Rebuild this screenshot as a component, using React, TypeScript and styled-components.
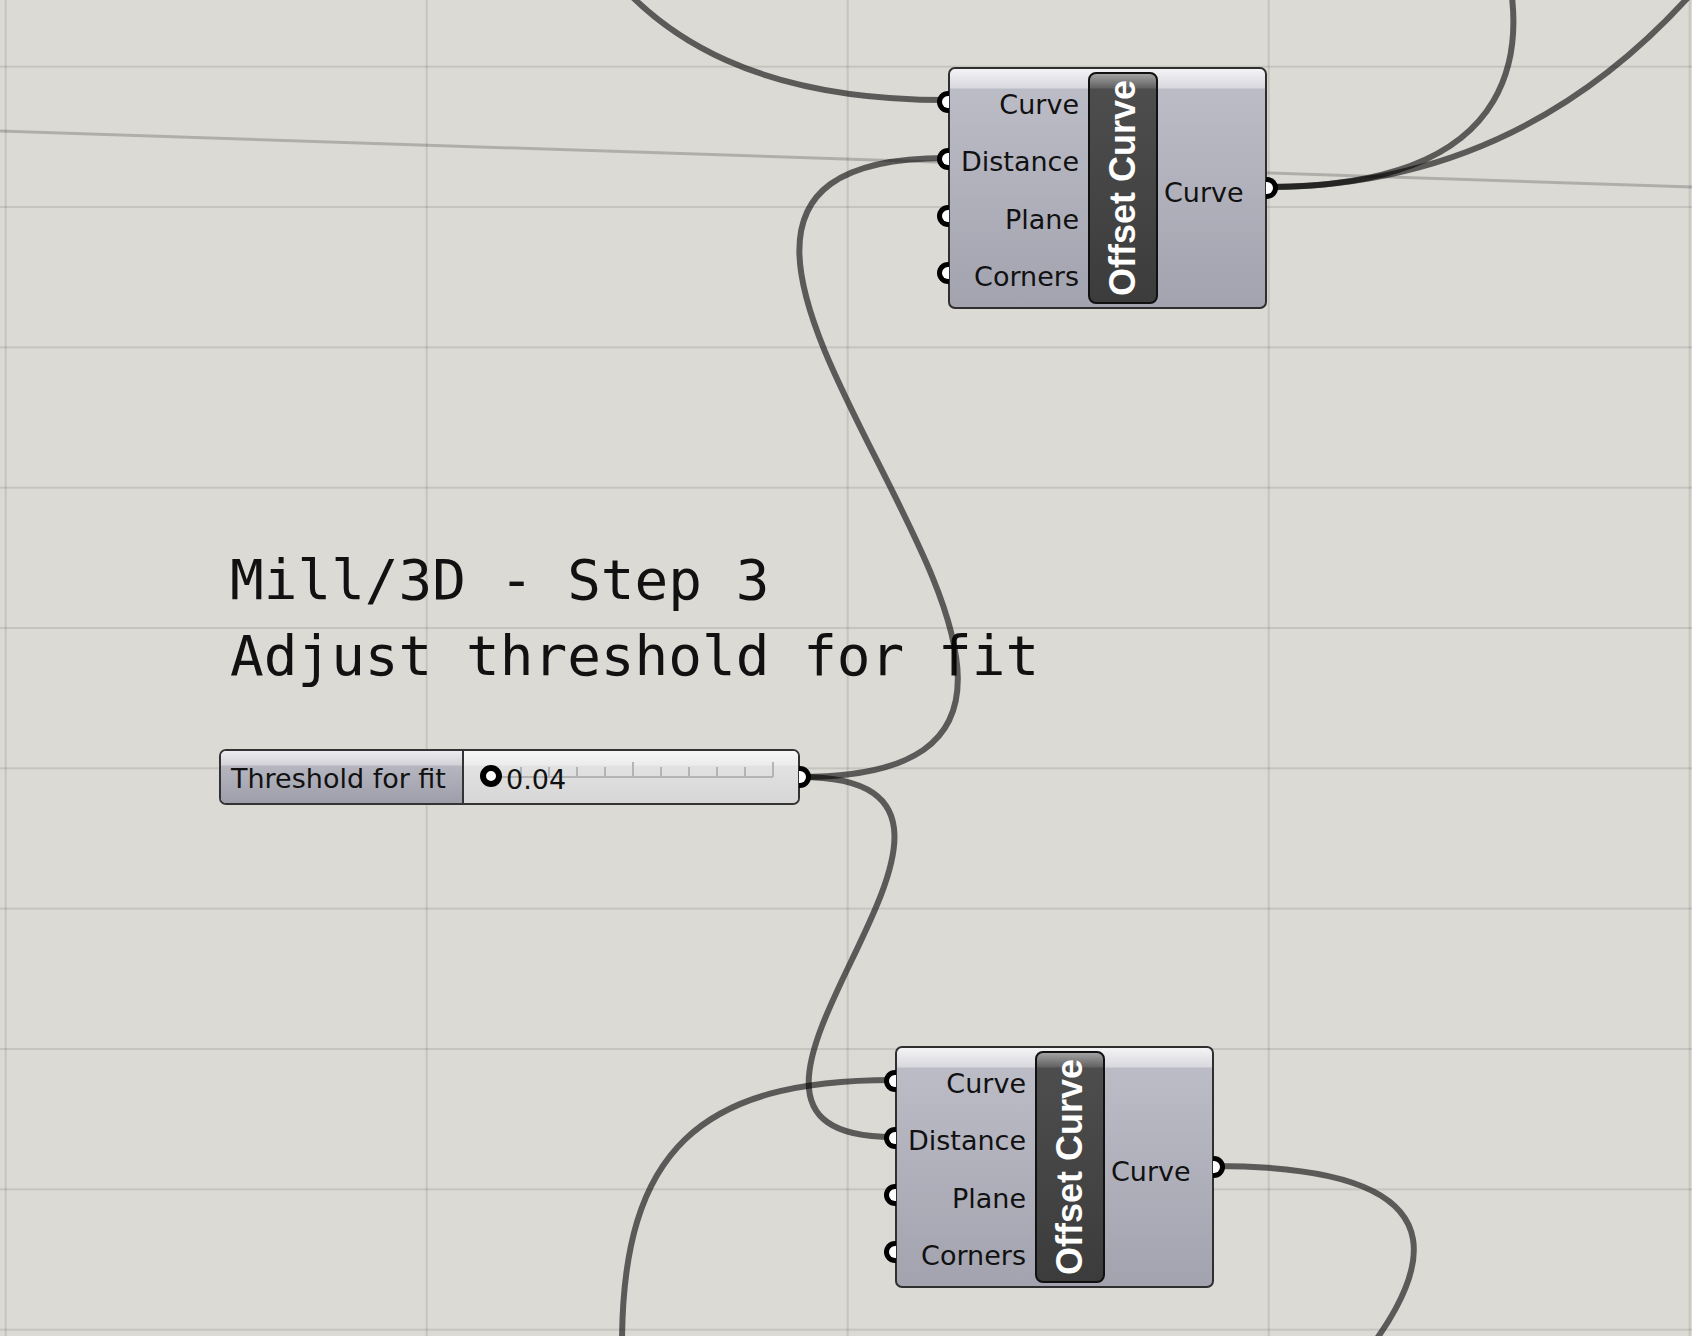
import React from "react";
import styled, { createGlobalStyle } from "styled-components";

const GlobalStyle = createGlobalStyle`
  html, body { margin: 0; padding: 0; background: #dcdad5; }
  body { font-family: "DejaVu Sans", "Liberation Sans", sans-serif; }
`;

const Canvas = styled.div`
  position: relative;
  width: 1692px;
  height: 1336px;
  overflow: hidden;
  background-color: #dcdad5;
  background-image:
    linear-gradient(to right, rgba(0, 0, 0, 0.1) 0 2px, transparent 2px),
    linear-gradient(to bottom, rgba(0, 0, 0, 0.1) 0 2px, transparent 2px);
  background-size: 421px 100%, 100% 140.33px;
  background-position: 4.7px 0, 0 65.7px;
`;

const Note = styled.div`
  position: absolute;
  left: 230px;
  top: 542px;
  z-index: 0;
  font-family: "DejaVu Sans Mono", "Liberation Mono", monospace;
  font-size: 56px;
  line-height: 75.5px;
  color: #111;
  white-space: pre;
`;

const WireLayer = styled.svg`
  position: absolute;
  inset: 0;
  z-index: 1;
  pointer-events: none;
`;

const Node = styled.div<{ $x: number; $y: number }>`
  position: absolute;
  left: ${(p) => p.$x}px;
  top: ${(p) => p.$y}px;
  z-index: 2;
  width: 319px;
  height: 242px;
  box-sizing: border-box;
  border: 2px solid #2f2f2f;
  border-radius: 7px;
  background: linear-gradient(
    to bottom,
    #f4f4f6 0px,
    #d8d8de 19px,
    #bcbcc7 20px,
    #a3a3af 100%
  );
  display: flex;
`;

const Inputs = styled.div`
  width: 138px;
  box-sizing: border-box;
  padding: 7px 9px 2px 0;
  display: flex;
  flex-direction: column;
`;

const Label = styled.div<{ $align: "start" | "end" }>`
  position: relative;
  flex: 1;
  display: flex;
  align-items: center;
  justify-content: ${(p) => (p.$align === "end" ? "flex-end" : "flex-start")};
  font-size: 27px;
  color: #111;
  white-space: nowrap;
`;

const GripIn = styled.span`
  position: absolute;
  left: -13px;
  top: calc(50% - 14px);
  width: 12px;
  height: 22px;
  box-sizing: border-box;
  border: 5px solid #000;
  border-right: none;
  border-radius: 11px 0 0 11px;
  background: #fff;
`;

const GripOut = styled.span<{ $shift: number }>`
  position: absolute;
  right: -13px;
  top: calc(50% - ${(p) => 11 + p.$shift}px);
  width: 12px;
  height: 22px;
  box-sizing: border-box;
  border: 5px solid #000;
  border-left: none;
  border-radius: 0 11px 11px 0;
  background: #fff;
`;

const TitleBar = styled.div`
  width: 70px;
  box-sizing: border-box;
  margin: 3px 0;
  border: 2px solid #111;
  border-radius: 8px;
  background: linear-gradient(
    to bottom,
    #a2a2a2 0px,
    #626262 14px,
    #4d4d4d 15px,
    #3c3c3c 100%
  );
  display: flex;
  align-items: center;
  justify-content: center;
`;

const Title = styled.span`
  writing-mode: vertical-rl;
  transform: rotate(180deg);
  font-family: "Liberation Sans", Arial, sans-serif;
  font-weight: bold;
  font-size: 36px;
  line-height: 1;
  color: #fff;
  white-space: nowrap;
`;

const Outputs = styled.div`
  position: relative;
  flex: 1;
  box-sizing: border-box;
  padding: 9px 0 0 6px;
  display: flex;
`;

const Slider = styled.div`
  position: absolute;
  left: 219px;
  top: 749px;
  z-index: 2;
  width: 581px;
  height: 56px;
  box-sizing: border-box;
  border: 2px solid #333;
  border-radius: 7px;
  display: flex;
`;

const SliderName = styled.div`
  width: 243px;
  box-sizing: border-box;
  border-right: 2px solid #333;
  border-radius: 5px 0 0 5px;
  padding: 3px 0 0 10px;
  background: linear-gradient(
    to bottom,
    #ececf0 0px,
    #d2d2d8 14px,
    #b6b6c1 15px,
    #9e9eaa 100%
  );
  display: flex;
  align-items: center;
  font-size: 27px;
  color: #111;
  white-space: nowrap;
`;

const SliderTrack = styled.div`
  position: relative;
  flex: 1;
  border-radius: 0 5px 5px 0;
  padding: 0 0 0 16px;
  background: linear-gradient(
    to bottom,
    #f6f6f6 0px,
    #ececec 14px,
    #e2e2e2 15px,
    #d6d6d6 100%
  );
  display: flex;
  align-items: center;
`;

const Rail = styled.svg`
  position: absolute;
  left: 0;
  top: 0;
  width: 100%;
  height: 100%;
`;

const Knob = styled.span`
  position: relative;
  margin-top: -2px;
  width: 22px;
  height: 22px;
  box-sizing: border-box;
  border: 6px solid #000;
  border-radius: 50%;
  background: #fff;
`;

const Value = styled.span`
  position: relative;
  margin: 5px 0 0 4px;
  font-size: 27px;
  color: #111;
`;

const inputs = ["Curve", "Distance", "Plane", "Corners"];

function OffsetCurve({ x, y }: { x: number; y: number }) {
  return (
    <Node $x={x} $y={y}>
      <Inputs>
        {inputs.map((name) => (
          <Label key={name} $align="end">
            <GripIn />
            {name}
          </Label>
        ))}
      </Inputs>
      <TitleBar>
        <Title>Offset Curve</Title>
      </TitleBar>
      <Outputs>
        <Label $align="start">
          Curve
          <GripOut $shift={5} />
        </Label>
      </Outputs>
    </Node>
  );
}

const ticks = Array.from({ length: 10 }, (_, i) => i + 1);

const wires = [
  "M 600 -40 C 660 40, 760 100, 946 100",
  "M 800 777 C 1270 777, 496 158, 946 158",
  "M 800 777 C 1075 777, 636 1137, 893 1137",
  "M 893 1080 C 700 1080, 622 1150, 622 1345",
  "M 1214 1166 C 1495 1166, 1420 1290, 1345 1380",
  "M 1267 187 C 1530 187, 1530 40, 1500 -60",
  "M 1267 187 C 1450 187, 1600 110, 1720 -40",
];

export default function App() {
  return (
    <>
      <GlobalStyle />
      <Canvas>
        <Note>{"Mill/3D - Step 3\nAdjust threshold for fit"}</Note>
        <WireLayer width={1692} height={1336} viewBox="0 0 1692 1336">
          <path d="M 0 131 L 1692 187" stroke="rgba(0,0,0,0.2)" strokeWidth={3} fill="none" />
          {wires.map((d, i) => (
            <path
              key={i}
              d={d}
              stroke="rgba(0,0,0,0.59)"
              strokeWidth={6}
              fill="none"
              strokeLinecap="round"
            />
          ))}
        </WireLayer>
        <OffsetCurve x={948} y={67} />
        <Slider>
          <SliderName>Threshold for fit</SliderName>
          <SliderTrack>
            <Rail viewBox="0 0 334 52">
              <line x1={29} y1={26} x2={309} y2={26} stroke="#b4b4b4" strokeWidth={2} />
              {ticks.map((i) => (
                <line
                  key={i}
                  x1={29 + i * 28}
                  x2={29 + i * 28}
                  y1={26}
                  y2={i % 5 === 0 ? 11 : 16}
                  stroke="#b4b4b4"
                  strokeWidth={2}
                />
              ))}
            </Rail>
            <Knob />
            <Value>0.04</Value>
          </SliderTrack>
          <GripOut $shift={0} />
        </Slider>
        <OffsetCurve x={895} y={1046} />
      </Canvas>
    </>
  );
}
